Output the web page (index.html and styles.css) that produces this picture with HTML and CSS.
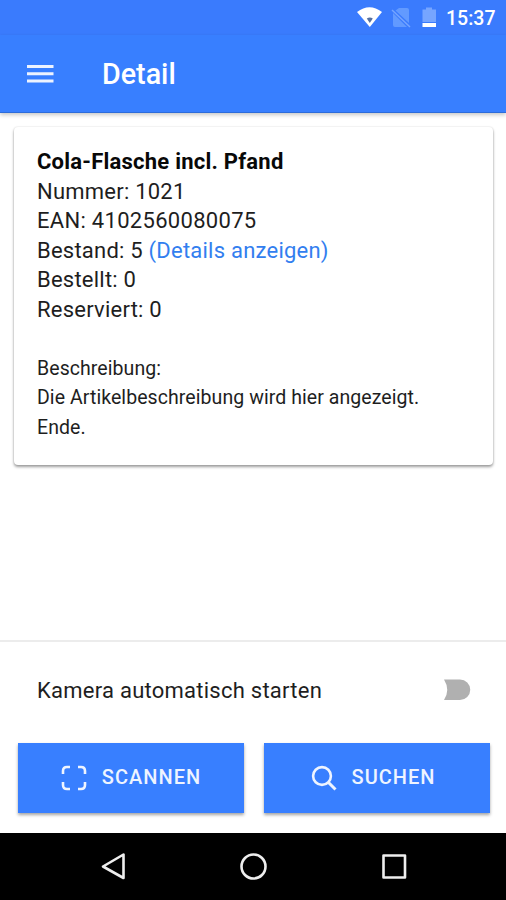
FILE: index.html
```html
<!DOCTYPE html>
<html lang="de">
<head>
<meta charset="utf-8">
<title>Detail</title>
<link rel="stylesheet" href="styles.css">
</head>
<body>
<div class="status">
  <svg class="status-icons" width="84" height="24" viewBox="0 0 84 24">
    <path fill="#fff" d="M0 6Q12.500 -3.500 25 6L12.800 21Z"/>
    <path fill="#56709f" d="M9.800 12.500Q12.800 10.500 15.800 12.500L12.800 17Z"/>
    <path fill="#629aff" d="M42 2h8q2 0 2 2v13L38.500 4.500zM36 7l14 14H38q-2 0-2-2z"/>
    <path stroke="#76a5ff" stroke-width="1.500" d="M35 4l18 17"/>
    <path fill="#76a5ff" d="M69 1.500h6v2h4v12.500H65.500V3.500H69z"/>
    <path fill="#fff" d="M65.500 17H79v4H65.500z"/>
  </svg>
  <span class="time">15:37</span>
</div>
<header class="toolbar">
  <svg class="menu" width="27" height="20" viewBox="0 0 27 20"><path stroke="#edf3ff" stroke-width="3" d="M0 2.500h26.500M0 9.800h26.500M0 17h26.500"/></svg>
  <h1>Detail</h1>
</header>
<main>
  <section class="card">
    <p class="name">Cola-Flasche incl. Pfand</p>
    <p>Nummer: 1021</p>
    <p class="ean">EAN: 4102560080075</p>
    <p>Bestand: 5 <a>(Details anzeigen)</a></p>
    <p>Bestellt: 0</p>
    <p>Reserviert: 0</p>
    <div class="description">
      <p>Beschreibung:</p>
      <p>Die Artikelbeschreibung wird hier angezeigt.</p>
      <p>Ende.</p>
    </div>
  </section>
</main>
<footer>
  <div class="setting">
    <span>Kamera automatisch starten</span>
    <svg class="toggle" width="27" height="22" viewBox="0 0 27 22"><path fill="#b0b0b0" d="M0 .5H16a10.200 10.200 0 0 1 0 20.500H0Q6.500 11 0 .5Z"/></svg>
  </div>
  <div class="buttons">
    <button><svg width="26" height="26" viewBox="0 0 26 26"><path fill="none" stroke="#eef4ff" stroke-width="2.600" d="M2 9V6q0-4 4-4h3M17 2h3q4 0 4 4v3M24 17v3q0 4-4 4h-3M9 24H6q-4 0-4-4v-3"/></svg><span>SCANNEN</span></button>
    <button class="search"><svg width="26" height="26" viewBox="0 0 26 26"><circle cx="11" cy="11" r="8.900" fill="none" stroke="#eef4ff" stroke-width="2.600"/><path stroke="#eef4ff" stroke-width="3" d="M17 17l7.500 7.500"/></svg><span>SUCHEN</span></button>
  </div>
</footer>
<nav>
  <svg width="506" height="66" viewBox="0 0 506 66"><g fill="none" stroke="#eee" stroke-width="2.600" stroke-linejoin="round"><path d="M123.500 21.500v23.500L103 33.500z"/><circle cx="253.500" cy="33.500" r="12"/><rect x="383.500" y="22.500" width="21.500" height="22"/></g></svg>
</nav>
</body>
</html>
```
FILE: styles.css
```css
* { box-sizing: border-box; }
body {
  margin: 0;
  height: 900px;
  display: flex;
  flex-direction: column;
  background: #fff;
  color: #1e1e1e;
  font-family: Roboto, sans-serif;
  overflow: hidden;
}
p, h1 { margin: 0; white-space: nowrap; }
.status {
  height: 35px;
  padding: 6px 10px 0 0;
  display: flex;
  justify-content: flex-end;
  background: #3a7bfd;
  color: #fff;
}
.status-icons { margin-right: 5px; }
.time { width: 50px; font-size: 19.500px; line-height: 25px; font-weight: 500; }
.toolbar {
  height: 78px;
  padding-left: 27px;
  display: flex;
  align-items: center;
  background: #387fff;
  border-bottom: 1px solid #2d6cda;
  box-shadow: 0 2px 4px rgba(0, 0, 0, .22);
  color: #fff;
}
.menu { margin-right: 48px; }
h1 { font-size: 28.700px; line-height: 36px; font-weight: 500; }
main { flex: 1; padding: 14px 13px 0 14px; }
.card {
  height: 338px;
  padding: 20px 23px;
  border-radius: 4px;
  box-shadow: 0 2px 3px rgba(0, 0, 0, .38), 0 0 2px rgba(0, 0, 0, .14);
  font-size: 22px;
  line-height: 29.500px;
  letter-spacing: .23px;
}
.name { font-weight: 700; color: #080808; }
.ean { letter-spacing: .3px; }
.card a { color: #327eef; }
.description { margin-top: 29.500px; font-size: 19.500px; letter-spacing: .07px; }
footer { height: 193px; border-top: 2px solid #ececec; background: #fff; }
.setting {
  height: 101px;
  padding: 0 35px 4px 37px;
  display: flex;
  align-items: center;
  justify-content: space-between;
  font-size: 22px;
  letter-spacing: .25px;
}
.toggle { margin-bottom: 2px; }
.buttons { display: grid; grid-template-columns: 1fr 1fr; gap: 20px; padding: 0 16px 0 18px; }
button {
  height: 70px;
  padding: 0;
  display: flex;
  align-items: center;
  justify-content: center;
  gap: 15px;
  border: 0;
  background: #387fff;
  box-shadow: 0 2px 3px rgba(0, 0, 0, .36);
  color: #eef4ff;
  font: 500 20px Roboto, sans-serif;
  letter-spacing: 1px;
}
button span { padding-bottom: 2px; }
.search { padding-right: 8px; }
nav { height: 67px; background: #000; }
nav svg { display: block; }
```
